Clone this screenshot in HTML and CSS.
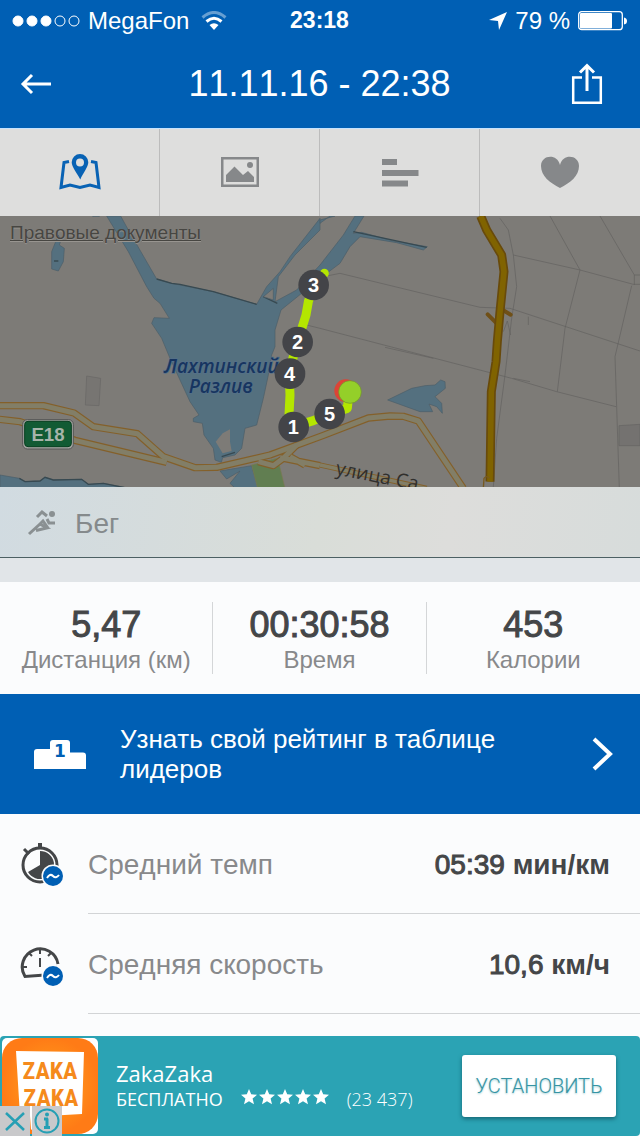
FILE: index.html
```html
<!DOCTYPE html>
<html lang="ru">
<head>
<meta charset="utf-8">
<meta name="viewport" content="width=device-width">
<title>11.11.16 - 22:38</title>
<link rel="stylesheet" href="styles.css">
</head>
<body>
<div class="app">
  <header class="top">
    <div class="status">
      <div class="status-left">
        <svg width="68" height="14" viewBox="0 0 68 14" fill="#fff" stroke="#fff"><circle cx="6" cy="7" r="5"/><circle cx="20" cy="7" r="5"/><circle cx="34" cy="7" r="5"/><g fill="none"><circle cx="48" cy="7" r="5"/><circle cx="62" cy="7" r="5"/></g></svg>
        <span>MegaFon</span>
        <svg class="wifi" width="26" height="20" viewBox="0 0 26 20" fill="none" stroke="#fff" stroke-width="3"><path d="M1.500 6.500Q13-3.500 24.500 6.500" opacity=".4"/><path d="M5.500 10.500Q13 4 20.500 10.500"/><path d="M8.500 14Q13 10.500 17.500 14L13 19Z" fill="#fff" stroke="none"/></svg>
      </div>
      <span class="clock">23:18</span>
      <div class="status-right">
        <svg width="18" height="18" viewBox="0 0 18 18" fill="#fff"><path d="M18 0L10 18L9 9L0 8Z"/></svg>
        <span>79&nbsp;%</span>
        <svg width="49" height="20" viewBox="0 0 49 20"><rect x=".7" y=".7" width="43.600" height="18" rx="3" fill="none" stroke="#fff" stroke-width="1.300"/><rect x="2" y="2" width="32" height="15.500" rx="1" fill="#fff"/><path d="M46 6.500Q49 7 49 10T46 13.500Z" fill="#fff"/></svg>
      </div>
    </div>
    <div class="titlebar">
      <button class="icon-button" aria-label="Назад"><svg width="32" height="22" viewBox="0 0 32 22" fill="none" stroke="#fff" stroke-width="3"><path d="M31 11H3M12 2L3 11L12 20"/></svg></button>
      <h1>11.11.16 - 22:38</h1>
      <button class="icon-button share" aria-label="Поделиться"><svg width="32" height="42" viewBox="0 0 32 42" fill="none" stroke="#fff" stroke-width="2.500"><path d="M11 14.500H2.200V39.800H29.800V14.500H21"/><path d="M16 28V3M9 9.500L16 2.500L23 9.500" stroke-width="3"/></svg></button>
    </div>
  </header>
  <nav class="tabs">
    <button class="tab" aria-label="Карта"><svg width="44" height="38" viewBox="0 0 44 38"><g fill="none" stroke="#0862b4" stroke-width="3"><path d="M11 7.500L6 8.500L3 33.500L12 31L22 33.500L32 31L41 33.500L38 8.500L33 7.500"/></g><path fill="#0862b4" fill-rule="evenodd" d="M22 0a8.300 8.300 0 0 1 8.300 8.300C30.300 13 25 19 22.300 25.500C19 19 13.700 13 13.700 8.300A8.300 8.300 0 0 1 22 0ZM22 4.500a4 4 0 1 0 0 8a4 4 0 0 0 0-8Z"/></svg></button>
    <button class="tab" aria-label="Фото"><svg width="40" height="32" viewBox="0 0 40 32" fill="#86888a"><path fill-rule="evenodd" d="M1 0H39V30H1ZM3.500 2.500V27.500H36.500V2.500Z"/><circle cx="30" cy="8" r="3"/><path d="M6 25V18L14.500 9.500L23 18L28 14L34 20V25Z"/></svg></button>
    <button class="tab" aria-label="Графики"><svg width="40" height="32" viewBox="0 0 40 32" fill="#86888a"><path d="M2 2H17V8H2ZM2 13H38.500V19H2ZM2 23.500H28V29.500H2Z"/></svg></button>
    <button class="tab" aria-label="Пульс"><svg width="40" height="34" viewBox="0 0 40 34" fill="#86888a"><path d="M20 32C10 27 1 20 1 10C1-1 17-3 20 9C23-3 39-1 39 10C39 20 30 27 20 32Z"/></svg></button>
  </nav>
  <section class="map-area">
    <svg class="map" viewBox="0 3 1920 813" preserveAspectRatio="xMidYMid slice" role="img" aria-label="Карта маршрута">
      <rect width="1920" height="820" fill="#7d7b77"/>
      <g fill="#54707f" stroke="#4b5d68" stroke-width="2">
        <path d="M320 3H362L385 45L470 192L515 205L640 230L770 268L800 215L840 170L870 125L960 10V45L885 120L835 185L825 260L890 225L960 150L1030 60L1065 3H1092L1060 55L1085 52L1180 78L1282 95L1270 105L1190 83L1080 65L1050 95L1020 145L960 190L895 243L843 285L825 345V395L815 420L805 480L790 550L770 630L735 640L725 700L705 720L668 728L664 742L645 735L640 700L612 660L607 625L580 620V610L597 600L570 560L510 430L485 370L455 325L462 308L508 310L480 265L462 250L440 215L385 110Z"/>
        <path d="M278 0H298V4H278ZM960 15L1005 3H990L960 25ZM175 60L182 78L178 90L193 100L190 140L175 168L155 162V110Z"/>
        <path d="M0 780L58 790L75 800L120 798L135 787L160 795L245 793L265 808L310 805L375 818H0Z"/>
        <path d="M660 768L755 752L775 820H706L690 805L720 768L680 792Z"/>
        <path d="M1163 555L1235 520L1275 512L1305 510L1322 495L1335 500L1336 520L1305 545L1325 565L1327 595L1310 575L1287 567L1298 590H1260Z"/>
      </g>
      <path d="M470 192L515 205L540 208L640 230L770 268M1060 50L1280 97M162 138H175M58 790L75 800L120 798L135 787L160 795L245 793L265 808L310 805L375 818M790 245L832 265M665 725L705 712" fill="none" stroke="#374951" stroke-width="4"/>
      <path d="M690 643L668 655L647 680L668 715L695 708L690 680Z" fill="#7d7b77"/>
      <path d="M820 220L790 245L820 255Z" fill="#7d7b77" stroke="#4b5d68" stroke-width="2"/>
      <path d="M755 750L842 727L838 750L855 820H773Z" fill="#617e51" stroke="#7b7850" stroke-width="2"/>
      <path d="M260 483L302 490L297 572L256 570Z" fill="#777572" stroke="#686765" stroke-width="2"/>
      <path d="M1857 632L1920 628V692H1857Z" fill="#747270" stroke="#656462" stroke-width="2"/>
      <g fill="none" stroke="#62615f" stroke-width="2">
        <path d="M985 182L1020 175L1440 277L1530 280L1920 408M920 330L960 340L1535 490L1670 530L1848 575M1155 397L1300 430M1540 120L1740 165L1900 208H1920M1500 10L1525 45L1540 120L1550 215L1535 310L1515 480L1490 670L1480 816M1650 3L1740 165L1695 340L1672 530M1800 3L1903 180V210M1920 180H1903M1895 212L1845 425L1858 820M1510 350L1522 318L1532 360M1540 490L1590 500M1585 305V330"/>
      </g>
      <g fill="none" stroke-linejoin="round">
        <g stroke="#84602a" stroke-width="22"><path d="M-10 572H130L222 594L280 635L412 656L490 725L585 758L650 757L810 720L970 661L1105 609L1170 603L1210 604L1255 618L1390 820"/><path d="M-10 612L60 620L225 676L500 742M775 740L820 752L850 730L890 690M840 728L960 752M870 725L915 750"/></g>
        <g stroke="#827e67" stroke-width="15"><path d="M-10 572H130L222 594L280 635L412 656L490 725L585 758L650 757L810 720L970 661L1105 609L1170 603L1210 604L1255 618L1390 820"/><path d="M-10 612L60 620L225 676L500 742M775 740L820 752L850 730L890 690M840 728L960 752M870 725L915 750"/></g>
        <path d="M960 750L1280 820" stroke="#84602a" stroke-width="16"/><path d="M960 750L1280 820" stroke="#827e67" stroke-width="10"/>
        <path d="M1463 298L1490 325M1505 283L1532 299" stroke="#705017" stroke-width="12" stroke-linecap="round"/>
        <path d="M1442 3L1460 45L1505 120L1512 170L1500 290L1492 380L1488 440L1474 530L1470 800" stroke="#684a0b" stroke-width="27"/>
        <path d="M1442 3L1460 45L1505 120L1512 170L1500 290L1492 380L1488 440L1474 530L1470 800" stroke="#806300" stroke-width="17"/>
        <path d="M1450 820L1452 790Q1460 780 1468 790" stroke="#77591f" stroke-width="4"/>
      </g>
      <g class="water-label"><text x="493" y="474">Лахтинский</text><text x="566" y="533">Разлив</text></g>
      <text class="street-label" transform="translate(1005 778) rotate(11)">улица Са</text>
      <rect x="68" y="614" width="152" height="88" rx="14" fill="#a2a39f" stroke="#555" stroke-width="3"/><rect x="74" y="619" width="140" height="76" rx="10" fill="#125b34" stroke="#074020" stroke-width="3"/><text class="road-label" x="144" y="677" text-anchor="middle">E18</text>
      <path d="M973 175L940 215L925 260L918 300L893 380L867 470L870 540L867 600L880 635L940 617L988 597L1042 580L1045 550" fill="none" stroke="#b4e600" stroke-width="27" stroke-linejoin="round" stroke-linecap="round"/>
      <circle cx="1037" cy="527" r="34" fill="#dc4436"/><circle cx="1050" cy="531" r="34" fill="#94cf29" stroke="#71902d" stroke-width="2"/>
      <g fill="#434448"><circle cx="941" cy="210" r="46"/><circle cx="893" cy="381" r="46"/><circle cx="870" cy="476" r="46"/><circle cx="881" cy="636" r="46"/><circle cx="989" cy="597" r="46"/></g>
      <g class="markers"><text x="941" y="232">3</text><text x="893" y="403">2</text><text x="869" y="498">4</text><text x="880" y="658">1</text><text x="989" y="619">5</text></g>
    </svg>
    <a class="legal" href="#legal">Правовые документы</a>
  </section>
  <section class="activity">
    <svg width="30" height="28" viewBox="0 0 30 28" fill="none" stroke="#8a9092" stroke-width="3"><circle cx="25" cy="4" r="3" fill="#8a9092" stroke="none"/><path d="M10 7L15 2L20 6M20 9L22 13H28"/><path d="M2 24L13 14L20 18L9 20.500M12 15L16 11L21 18"/></svg>
    <span>Бег</span>
  </section>
  <section class="stats">
    <div class="stat"><strong>5,47</strong><span>Дистанция (км)</span></div>
    <div class="stat"><strong>00:30:58</strong><span>Время</span></div>
    <div class="stat"><strong>453</strong><span>Калории</span></div>
  </section>
  <a class="leaders" href="#leaders">
    <svg width="54" height="32" viewBox="0 0 54 32"><path fill="#fff" d="M1 14Q1 11 4 11H17V5Q17 2 20 2H34Q37 2 37 5V14.500H50Q53 14.500 53 17.500V31H1Z"/><text class="place" x="27" y="19" text-anchor="middle">1</text></svg>
    <span class="leaders-text">Узнать свой рейтинг в таблице лидеров</span>
    <svg width="22" height="36" viewBox="0 0 22 36" fill="none" stroke="#fff" stroke-width="4"><path d="M2 3L18 18L2 33"/></svg>
  </a>
  <main class="metrics">
    <div class="metric">
      <svg width="44" height="46" viewBox="0 0 44 46"><g fill="none" stroke="#444648" stroke-width="3"><circle cx="20" cy="24" r="17"/><path d="M20 7V2" stroke-width="4"/><path d="M4 8L9 13"/></g><path fill="#444648" d="M20 24V10A14 14 0 1 1 8 31Z"/><circle cx="33" cy="35" r="11.500" fill="#fbfcfd"/><circle cx="33" cy="35" r="10" fill="#005fb4"/><path d="M27 37Q30 32 33 35T39 34" fill="none" stroke="#fff" stroke-width="2"/></svg>
      <div class="metric-line"><span>Средний темп</span><span class="value">05:39 <b>мин/км</b></span></div>
    </div>
    <div class="metric">
      <svg width="44" height="46" viewBox="0 0 44 46"><g fill="none" stroke="#444648" stroke-width="3"><path d="M25 34L5 35.500A18 18 0 1 1 38 23"/><path d="M20 17V26M20 8V13M9 12L12 15M31 12L28 15M3 26H7M30 25H37" stroke-width="2"/></g><circle cx="33" cy="35" r="11.500" fill="#fbfcfd"/><circle cx="33" cy="35" r="10" fill="#005fb4"/><path d="M27 37Q30 32 33 35T39 34" fill="none" stroke="#fff" stroke-width="2"/></svg>
      <div class="metric-line"><span>Средняя скорость</span><span class="value">10,6 <b>км/ч</b></span></div>
    </div>
  </main>
  <aside class="ad">
    <div class="ad-logo">
      <svg width="96" height="96" viewBox="0 0 96 96"><defs><radialGradient id="orange"><stop stop-color="#ffa51c"/><stop offset="1" stop-color="#ff7b16"/></radialGradient></defs><rect width="96" height="96" rx="5" fill="#fff"/><rect width="96" height="96" rx="20" fill="url(#orange)"/><path d="M14 13L82 14L80 76L45 78L29 92L28 78H18Z" fill="#fff"/><g class="zaka"><text x="48" y="41" text-anchor="middle">ZAKA</text><text x="49" y="68" text-anchor="middle">ZAKA</text></g></svg>
      <div class="ad-tools">
        <button aria-label="Закрыть"><svg width="30" height="30" viewBox="0 0 30 30" stroke="#269fb4" stroke-width="2.500"><path d="M6 7L24 24M24 7L6 24"/></svg></button>
        <button aria-label="О рекламе"><svg width="30" height="30" viewBox="0 0 30 30" fill="none" stroke="#269fb4"><circle cx="15" cy="15" r="11.500" stroke-width="2"/><path d="M15 12.500V22M12 13H16M12 21.500H18" stroke-width="3"/><circle cx="15" cy="8.500" r="1" stroke-width="2"/></svg></button>
      </div>
    </div>
    <div class="ad-info">
      <div class="ad-name">ZakaZaka</div>
      <div class="ad-meta"><span>БЕСПЛАТНО</span><svg width="88" height="20" viewBox="0 0 88 20" fill="#fff"><path id="star" d="M8 0L10.200 5.300L16 5.800L11.600 9.600L13 15.200L8 12.200L3 15.200L4.400 9.600L0 5.800L5.800 5.300Z"/><use href="#star" x="18"/><use href="#star" x="36"/><use href="#star" x="54"/><use href="#star" x="72"/></svg><span class="count">(23 437)</span></div>
    </div>
    <button class="install">УСТАНОВИТЬ</button>
  </aside>
</div>
</body>
</html>
```
FILE: styles.css
```css
* { box-sizing: border-box; }
body { margin: 0; background: #fbfcfd; font-family: "Liberation Sans", Arial, sans-serif; font-kerning: none; }
button { border: 0; padding: 0; background: none; font: inherit; color: inherit; }
svg { display: block; flex: none; }
.app { display: flex; flex-direction: column; min-height: 100vh; }

.top { background: #005fb4; color: #fff; }
.status { height: 40px; padding: 1px 13px 0 12px; display: grid; grid-template-columns: 1fr auto 1fr; align-items: center; font-size: 24px; }
.status-left, .status-right { display: flex; align-items: center; gap: 8px; }
.wifi { margin-left: 4px; }
.status-right { justify-content: flex-end; }
.clock { font-weight: 700; font-size: 23px; }
.titlebar { height: 88px; padding: 0 37px 0 20px; display: grid; grid-template-columns: 48px 1fr 32px; align-items: center; }
.titlebar h1 { margin: 0; font-size: 36px; font-weight: 400; text-align: center; }

.tabs { display: grid; grid-template-columns: repeat(4, 1fr); height: 88px; background: #dededd; border-top: 1px solid #c5e3ff; }
.tab { display: grid; place-items: center; border-right: 1px solid #bcbcbc; }
.tab:last-child { border-right: 0; }

.map-area { position: relative; height: 271px; }
.map { width: 100%; height: 100%; }
.legal { position: absolute; left: 10px; top: 6px; font-size: 19px; line-height: 22px; color: #474642; text-shadow: 0 1px 1px #989590; }
.water-label { font: italic 600 57px "Open Sans", "Noto Sans", sans-serif; fill: #173560; stroke: #54708a; stroke-width: 4px; paint-order: stroke; }
.street-label { font: 58px "Open Sans", "Noto Sans", sans-serif; fill: #302f2d; }
.road-label { font: 700 56px "Liberation Sans", sans-serif; fill: #a7b4aa; }
.markers { font: 700 60px "Liberation Sans", sans-serif; fill: #fff; text-anchor: middle; }

.activity { height: 71px; padding: 3px 27px 0; display: flex; align-items: center; gap: 18px; border-bottom: 1px solid #4c6063; background: linear-gradient(100deg, #d1dbe1, #d9ddd8 50%, #dddddb 70%, #d7dcdb); color: #858a8c; font-size: 28px; }
.stats { border-top: 24px solid #e1e5e8; height: 136px; display: grid; grid-template-columns: repeat(3, 1fr); align-items: center; background: #fbfcfd; }
.stat { height: 72px; display: flex; flex-direction: column; align-items: center; border-right: 1px solid #d4d6d8; }
.stat:last-child { border-right: 0; }
.stat strong { font-size: 36px; line-height: 46px; font-weight: 400; color: #444648; -webkit-text-stroke: 1px #444648; }
.stat span { font-size: 24px; line-height: 24px; color: #88898b; }

.leaders { height: 120px; padding: 0 26px 0 33px; display: flex; align-items: center; background: #005fb4; color: #fff; text-decoration: none; font-size: 26px; line-height: 30px; }
.place { font: 700 17px "DejaVu Sans", sans-serif; fill: #005fb4; }
.leaders-text { flex: 1; padding: 0 60px 0 33px; }

.metrics { flex: 1; }
.metric { height: 100px; display: flex; align-items: center; gap: 24px; padding-left: 20px; }
.metric-line { flex: 1; height: 100px; display: flex; align-items: center; justify-content: space-between; padding: 2px 30px 0 0; border-bottom: 1px solid #d2d4d6; font-size: 28px; color: #88898b; }
.value { color: #444648; -webkit-text-stroke: 1px #444648; }
.value b { -webkit-text-stroke: 0; }

.ad { height: 100px; display: flex; align-items: center; padding: 0 24px 0 2px; border-radius: 4px; background: #2ba3b4; color: #fff; font-family: "Open Sans", sans-serif; }
.ad-logo { position: relative; height: 96px; }
.zaka { font: 700 24px "Liberation Sans Narrow", "Roboto Condensed", "DejaVu Sans Condensed", sans-serif; fill: #f58a1c; }
.ad-tools { position: absolute; left: -2px; bottom: -2px; display: flex; gap: 2px; }
.ad-tools button { background: #c9c9cb; }
.ad-info { flex: 1; padding-left: 18px; white-space: nowrap; }
.ad-name { font-size: 22px; line-height: 26px; }
.ad-meta { display: flex; align-items: center; gap: 18px; font-size: 18px; line-height: 26px; }
.count { font-weight: 300; }
.install { width: 154px; height: 62px; border-radius: 3px; background: #fff; box-shadow: 0 2px 4px #176775; color: #3694a4; font: 300 20px Roboto, sans-serif; text-shadow: 0 1px 2px #9acbd2; }
```
